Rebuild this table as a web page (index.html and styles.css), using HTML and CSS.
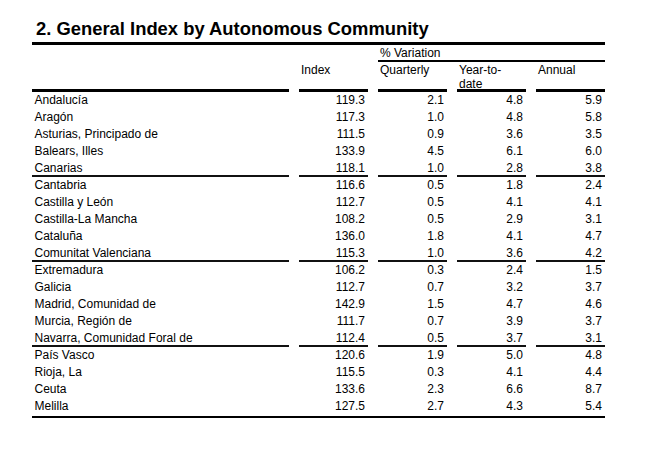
FILE: index.html
```html
<!DOCTYPE html>
<html lang="en">
<head>
<meta charset="utf-8">
<title>General Index by Autonomous Community</title>
<link rel="stylesheet" href="styles.css">
</head>
<body>
<div class="page">
  <h1 class="title">2. General Index by Autonomous Community</h1>
  <div class="head">
    <div class="var">% Variation</div>
    <div class="hc"></div>
    <div class="hc">Index</div>
    <div class="hc">Quarterly</div>
    <div class="hc">Year-to-<br>date</div>
    <div class="hc">Annual</div>
  </div>
  <div class="body">
    <div class="row"><div class="name">Andalucía</div><div class="num">119.3</div><div class="num">2.1</div><div class="num">4.8</div><div class="num">5.9</div></div>
    <div class="row"><div class="name">Aragón</div><div class="num">117.3</div><div class="num">1.0</div><div class="num">4.8</div><div class="num">5.8</div></div>
    <div class="row"><div class="name">Asturias, Principado de</div><div class="num">111.5</div><div class="num">0.9</div><div class="num">3.6</div><div class="num">3.5</div></div>
    <div class="row"><div class="name">Balears, Illes</div><div class="num">133.9</div><div class="num">4.5</div><div class="num">6.1</div><div class="num">6.0</div></div>
    <div class="row end"><div class="name">Canarias</div><div class="num">118.1</div><div class="num">1.0</div><div class="num">2.8</div><div class="num">3.8</div></div>
    <div class="row"><div class="name">Cantabria</div><div class="num">116.6</div><div class="num">0.5</div><div class="num">1.8</div><div class="num">2.4</div></div>
    <div class="row"><div class="name">Castilla y León</div><div class="num">112.7</div><div class="num">0.5</div><div class="num">4.1</div><div class="num">4.1</div></div>
    <div class="row"><div class="name">Castilla-La Mancha</div><div class="num">108.2</div><div class="num">0.5</div><div class="num">2.9</div><div class="num">3.1</div></div>
    <div class="row"><div class="name">Cataluña</div><div class="num">136.0</div><div class="num">1.8</div><div class="num">4.1</div><div class="num">4.7</div></div>
    <div class="row end"><div class="name">Comunitat Valenciana</div><div class="num">115.3</div><div class="num">1.0</div><div class="num">3.6</div><div class="num">4.2</div></div>
    <div class="row"><div class="name">Extremadura</div><div class="num">106.2</div><div class="num">0.3</div><div class="num">2.4</div><div class="num">1.5</div></div>
    <div class="row"><div class="name">Galicia</div><div class="num">112.7</div><div class="num">0.7</div><div class="num">3.2</div><div class="num">3.7</div></div>
    <div class="row"><div class="name">Madrid, Comunidad de</div><div class="num">142.9</div><div class="num">1.5</div><div class="num">4.7</div><div class="num">4.6</div></div>
    <div class="row"><div class="name">Murcia, Región de</div><div class="num">111.7</div><div class="num">0.7</div><div class="num">3.9</div><div class="num">3.7</div></div>
    <div class="row end"><div class="name">Navarra, Comunidad Foral de</div><div class="num">112.4</div><div class="num">0.5</div><div class="num">3.7</div><div class="num">3.1</div></div>
    <div class="row"><div class="name">País Vasco</div><div class="num">120.6</div><div class="num">1.9</div><div class="num">5.0</div><div class="num">4.8</div></div>
    <div class="row"><div class="name">Rioja, La</div><div class="num">115.5</div><div class="num">0.3</div><div class="num">4.1</div><div class="num">4.4</div></div>
    <div class="row"><div class="name">Ceuta</div><div class="num">133.6</div><div class="num">2.3</div><div class="num">6.6</div><div class="num">8.7</div></div>
    <div class="row"><div class="name">Melilla</div><div class="num">127.5</div><div class="num">2.7</div><div class="num">4.3</div><div class="num">5.4</div></div>
  </div>
  <div class="foot"></div>
</div>
</body>
</html>
```
FILE: styles.css
```css
html, body {
  margin: 0;
  padding: 0;
  background: #fff;
}
body {
  font-family: "Liberation Sans", Arial, sans-serif;
  color: #000;
  font-size: 12px;
}
.page {
  width: 573px;
  padding: 18px 0 0 32px;
}
.title {
  margin: 0;
  padding: 0 0 2px 4px;
  font-size: 18.4px;
  line-height: 22px;
  font-weight: bold;
  border-bottom: 3px solid #000;
}
.head,
.row {
  display: grid;
  grid-template-columns: 257px repeat(4, 69px);
  column-gap: 10px;
}
.var {
  grid-column: 3 / 6;
  padding: 1px 0 0 2px;
  line-height: 14px;
  border-bottom: 2px solid #000;
}
.hc {
  grid-row: 2;
  box-sizing: border-box;
  height: 30px;
  padding: 1px 0 0 2px;
  line-height: 14px;
  border-bottom: 3px solid #000;
}
.row {
  height: 17px;
}
.row > div {
  box-sizing: border-box;
  height: 17px;
  line-height: 17px;
  white-space: nowrap;
}
.row.end > div {
  border-bottom: 2px solid #111;
}
.name {
  padding-left: 2.5px;
}
.num {
  text-align: right;
  padding-right: 3px;
}
.foot {
  margin-top: 1px;
  border-top: 2px solid #000;
}
```
